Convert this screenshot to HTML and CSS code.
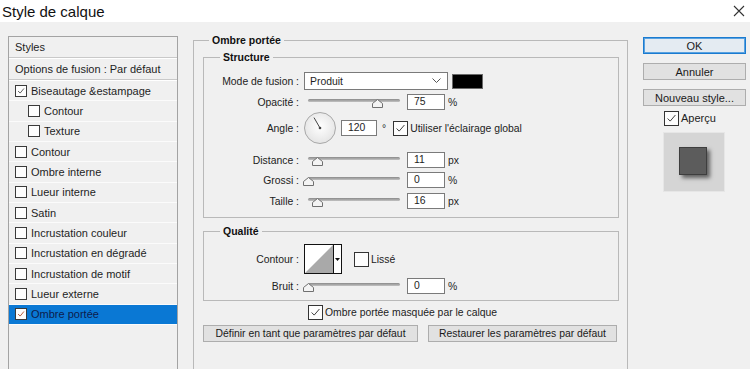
FILE: index.html
```html
<!DOCTYPE html>
<html lang="fr">
<head>
  <meta charset="UTF-8">
  <title>Style de calque</title>
  <link rel="stylesheet" href="styles.css">
</head>
<body>
  <div class="titlebar">
    <span class="title">Style de calque</span>
    <svg class="close" width="12" height="12" viewBox="0 0 12 12"><path d="M1 1 L11 11 M11 1 L1 11" stroke="#333" stroke-width="1.1" fill="none"/></svg>
  </div>

  <div class="dialog">
    <!-- liste des styles -->
    <div class="list">
      <div class="item head">Styles</div>
      <div class="item head">Options de fusion : Par défaut</div>
      <div class="item"><span class="cb"><svg viewBox="0 0 12 12"><path d="M2.5 6 L5 8.5 L9.5 3" /></svg></span>Biseautage &amp;estampage</div>
      <div class="item sub"><span class="cb"></span>Contour</div>
      <div class="item sub"><span class="cb"></span>Texture</div>
      <div class="item"><span class="cb"></span>Contour</div>
      <div class="item"><span class="cb"></span>Ombre interne</div>
      <div class="item"><span class="cb"></span>Lueur interne</div>
      <div class="item"><span class="cb"></span>Satin</div>
      <div class="item"><span class="cb"></span>Incrustation couleur</div>
      <div class="item"><span class="cb"></span>Incrustation en dégradé</div>
      <div class="item"><span class="cb"></span>Incrustation de motif</div>
      <div class="item"><span class="cb"></span>Lueur externe</div>
      <div class="item active"><span class="cb"><svg viewBox="0 0 12 12"><path d="M2.5 6 L5 8.5 L9.5 3" /></svg></span>Ombre portée</div>
    </div>

    <!-- panneau principal -->
    <fieldset class="effect">
      <legend>Ombre portée</legend>

      <fieldset class="group structure">
        <legend>Structure</legend>
        <div class="row r-mode">
          <span class="lbl">Mode de fusion :</span>
          <div class="select">Produit
            <svg class="chev" width="9" height="6" viewBox="0 0 9 6"><path d="M0.5 0.5 L4.5 4.5 L8.5 0.5" stroke="#555" fill="none"/></svg>
          </div>
          <span class="swatch"></span>
        </div>
        <div class="row r-opac">
          <span class="lbl">Opacité :</span>
          <div class="slider"><svg class="thumb" style="left:75%" width="11" height="9" viewBox="0 0 11 9"><path d="M0.5 8.5 V4.5 L5.5 0.5 L10.5 4.5 V8.5 Z"/></svg></div>
          <span class="num">75</span><span class="unit">%</span>
        </div>
        <div class="row r-angle">
          <span class="lbl">Angle :</span>
          <svg class="dial" width="32" height="32" viewBox="0 0 32 32">
            <defs><radialGradient id="dg" cx="50%" cy="45%" r="60%"><stop offset="0" stop-color="#ffffff"/><stop offset="1" stop-color="#e2e2e2"/></radialGradient></defs>
            <circle cx="16" cy="16" r="15.5" fill="url(#dg)" stroke="#a8a8a8"/>
            <line x1="16" y1="16" x2="10" y2="5.6" stroke="#444" stroke-width="1"/>
            <circle cx="16" cy="16" r="1.3" fill="#444"/>
          </svg>
          <span class="num angle">120</span><span class="unit deg">°</span>
          <span class="cb big"><svg viewBox="0 0 15 15"><path d="M3 7.5 L6 10.5 L12 3.5" /></svg></span>
          <span class="cbtext">Utiliser l'éclairage global</span>
        </div>
        <div class="row r-dist">
          <span class="lbl">Distance :</span>
          <div class="slider"><svg class="thumb" style="left:10%" width="11" height="9" viewBox="0 0 11 9"><path d="M0.5 8.5 V4.5 L5.5 0.5 L10.5 4.5 V8.5 Z"/></svg></div>
          <span class="num">11</span><span class="unit">px</span>
        </div>
        <div class="row r-gros">
          <span class="lbl">Grossi :</span>
          <div class="slider"><svg class="thumb" style="left:0%" width="11" height="9" viewBox="0 0 11 9"><path d="M0.5 8.5 V4.5 L5.5 0.5 L10.5 4.5 V8.5 Z"/></svg></div>
          <span class="num">0</span><span class="unit">%</span>
        </div>
        <div class="row r-taille">
          <span class="lbl">Taille :</span>
          <div class="slider"><svg class="thumb" style="left:10%" width="11" height="9" viewBox="0 0 11 9"><path d="M0.5 8.5 V4.5 L5.5 0.5 L10.5 4.5 V8.5 Z"/></svg></div>
          <span class="num">16</span><span class="unit">px</span>
        </div>
      </fieldset>

      <fieldset class="group qualite">
        <legend>Qualité</legend>
        <div class="row r-contour">
          <span class="lbl">Contour :</span>
          <div class="contour">
            <svg width="28" height="28" viewBox="0 0 28 28"><path d="M0 28 L28 0 L28 28 Z" fill="#a9a9a9"/></svg>
            <span class="drop"><svg width="5" height="3" viewBox="0 0 5 3"><path d="M0 0 H5 L2.5 3 Z" fill="#111"/></svg></span>
          </div>
          <span class="cb big lisse"></span>
          <span class="cbtext">Lissé</span>
        </div>
        <div class="row r-bruit">
          <span class="lbl">Bruit :</span>
          <div class="slider"><svg class="thumb" style="left:0%" width="11" height="9" viewBox="0 0 11 9"><path d="M0.5 8.5 V4.5 L5.5 0.5 L10.5 4.5 V8.5 Z"/></svg></div>
          <span class="num">0</span><span class="unit">%</span>
        </div>
      </fieldset>

      <div class="row r-mask">
        <span class="cb big"><svg viewBox="0 0 15 15"><path d="M3 7.5 L6 10.5 L12 3.5" /></svg></span>
        <span class="cbtext">Ombre portée masquée par le calque</span>
      </div>
      <div class="btns">
        <span class="btn b-def">Définir en tant que paramètres par défaut</span>
        <span class="btn b-rest">Restaurer les paramètres par défaut</span>
      </div>
    </fieldset>

    <!-- boutons de droite -->
    <div class="side">
      <span class="btn side-btn ok">OK</span>
      <span class="btn side-btn">Annuler</span>
      <span class="btn side-btn">Nouveau style...</span>
      <div class="apercu">
        <span class="cb big"><svg viewBox="0 0 15 15"><path d="M3 7.5 L6 10.5 L12 3.5" /></svg></span>
        <span class="cbtext">Aperçu</span>
      </div>
      <div class="preview"><span class="square"></span></div>
    </div>
  </div>
</body>
</html>
```
FILE: styles.css
```css
body {
  margin: 0;
  height: 369px;
  overflow: hidden;
  background: #f0f0f0;
  font-family: "Liberation Sans", Arial, sans-serif;
  color: #1e1e1e;
}
.titlebar {
  height: 22px;
  background: #fff;
  display: flex;
  justify-content: space-between;
  align-items: center;
  padding: 0 5px 0 2px;
}
.title {
  font-size: 15px;
  color: #111;
}
.close {
  margin-top: -1px;
}
.dialog {
  display: flex;
  align-items: flex-start;
  padding-left: 8px;
}

/* liste */
.list {
  width: 170px;
  height: 333px;
  margin-top: 14px;
  box-sizing: border-box;
  border: 1px solid #a3a3a3;
  border-bottom: none;
  font-size: 11px;
}
.item {
  height: 20.35px;
  box-sizing: border-box;
  border-bottom: 1px solid #fbfbfb;
  display: flex;
  align-items: center;
  padding-left: 6px;
  white-space: nowrap;
}
.item.head {
  height: 21px;
  border-bottom: 1px solid #c9c9c9;
  box-shadow: 0 1px 0 #fff;
  margin-bottom: 1px;
}
.item.sub {
  padding-left: 19px;
}
.item.active {
  background: #0a78d4;
  color: #0d1c4c;
}
.cb {
  width: 12px;
  height: 12px;
  box-sizing: border-box;
  border: 1px solid #3a3a3a;
  background: #fdfdfd;
  margin-right: 4px;
  flex: none;
  display: flex;
}
.cb svg {
  width: 100%;
  height: 100%;
  fill: none;
  stroke: #505050;
  stroke-width: 1.1;
}
.item.active .cb svg {
  stroke: #b0502e;
}
.cb.big {
  width: 15px;
  height: 15px;
  border-color: #333;
  margin-right: 2px;
}
.cb.big svg {
  stroke: #333;
}

/* panneau principal */
fieldset {
  margin: 0;
  padding: 0;
  min-width: 0;
  border: 1px solid #b9b9b9;
}
legend {
  padding: 0 3px;
  font-size: 10.5px;
  font-weight: bold;
  line-height: 12px;
  color: #111;
}
.effect {
  width: 435px;
  height: 335px;
  box-sizing: border-box;
  margin: 12px 0 0 15px;
  padding: 0 8px 0 9px;
  border-bottom: none;
  font-size: 10.4px;
}
.effect > legend {
  margin-left: 6px;
}
.group {
  margin-top: 5px;
  padding: 0 0 7px 0;
}
.group legend {
  margin-left: 16px;
}
.qualite {
  margin-top: 7px;
  padding-bottom: 5px;
}
.row {
  display: flex;
  align-items: center;
  height: 18px;
  white-space: nowrap;
}
.lbl {
  width: 95px;
  text-align: right;
  margin-right: 5px;
  flex: none;
  color: #222;
}
.r-mode { margin-top: 9px; }
.r-opac { margin-top: 3px; }
.r-angle { margin-top: 1px; height: 32px; }
.r-dist { margin-top: 7px; }
.r-gros { margin-top: 2px; }
.r-taille { margin-top: 3px; }
.r-contour { margin-top: 7px; height: 30px; }
.r-bruit { margin-top: 3px; }
.r-mask { margin-top: 2px; padding-left: 105px; }

.select {
  width: 144px;
  height: 18px;
  box-sizing: border-box;
  border: 1px solid #7a7a7a;
  background: #fff;
  display: flex;
  align-items: center;
  justify-content: space-between;
  padding: 0 6px 0 5px;
}
.swatch {
  width: 31px;
  height: 15px;
  box-sizing: border-box;
  margin-left: 4px;
  background: #000;
  border: 1px solid #6a6a6a;
}
.slider {
  position: relative;
  width: 92px;
  height: 16px;
  margin-left: 4px;
  flex: none;
}
.slider::before {
  content: "";
  position: absolute;
  left: 0;
  right: 0;
  top: 5px;
  height: 3px;
  border-radius: 2px;
  background: linear-gradient(#8a8a8a, #c2c2c2);
}
.thumb {
  position: absolute;
  top: 5px;
  margin-left: -5px;
  fill: #f4f4f4;
  stroke: #707070;
}
.num {
  width: 38px;
  height: 16px;
  box-sizing: border-box;
  margin-left: 7px;
  border: 1px solid #7a7a7a;
  background: #fff;
  padding-left: 6px;
  line-height: 14px;
  flex: none;
}
.unit {
  margin-left: 3px;
}
.dial {
  flex: none;
}
.num.angle {
  width: 36px;
  margin-left: 5px;
}
.unit.deg {
  margin-left: 5px;
  margin-right: 7px;
}
.cbtext {
  color: #222;
}
.contour {
  width: 38px;
  height: 30px;
  box-sizing: border-box;
  border: 1px solid #111;
  background: #fff;
  display: flex;
}
.contour svg {
  flex: none;
}
.drop {
  flex: 1;
  border-left: 1px solid #111;
  display: flex;
  align-items: center;
  justify-content: center;
}
.lisse {
  margin-left: 12px;
  margin-right: 1px;
}
.btns {
  display: flex;
  gap: 10px;
  margin-top: 4px;
}
.btn {
  height: 17px;
  box-sizing: border-box;
  border: 1px solid #adadad;
  background: #e1e1e1;
  display: flex;
  align-items: center;
  justify-content: center;
  color: #1a1a1a;
  white-space: nowrap;
}
.b-def { width: 215px; }
.b-rest { width: 189px; }

/* colonne de droite */
.side {
  width: 103px;
  margin: 15px 0 0 15px;
  display: flex;
  flex-direction: column;
  font-size: 11px;
}
.side-btn {
  margin-bottom: 9px;
}
.side-btn.ok {
  border-color: #1b7bd0;
  box-shadow: inset 0 0 0 1px #5aa2e0;
  background: #e4ebf2;
}
.apercu {
  display: flex;
  align-items: center;
  height: 16px;
  margin-top: -5px;
  padding-left: 21px;
}
.preview {
  width: 62px;
  height: 60px;
  margin: 6px 0 0 20px;
  background: #d5d5d5;
  border: 1px solid #e6e6e6;
  box-sizing: border-box;
  display: flex;
  align-items: center;
  justify-content: center;
}
.square {
  width: 28px;
  height: 28px;
  box-sizing: border-box;
  background: #5c5c5c;
  border: 1px solid #3e3e3e;
  box-shadow: 3px 3px 4px rgba(0, 0, 0, 0.55);
  margin: -2px 0 0 -3px;
}
```
